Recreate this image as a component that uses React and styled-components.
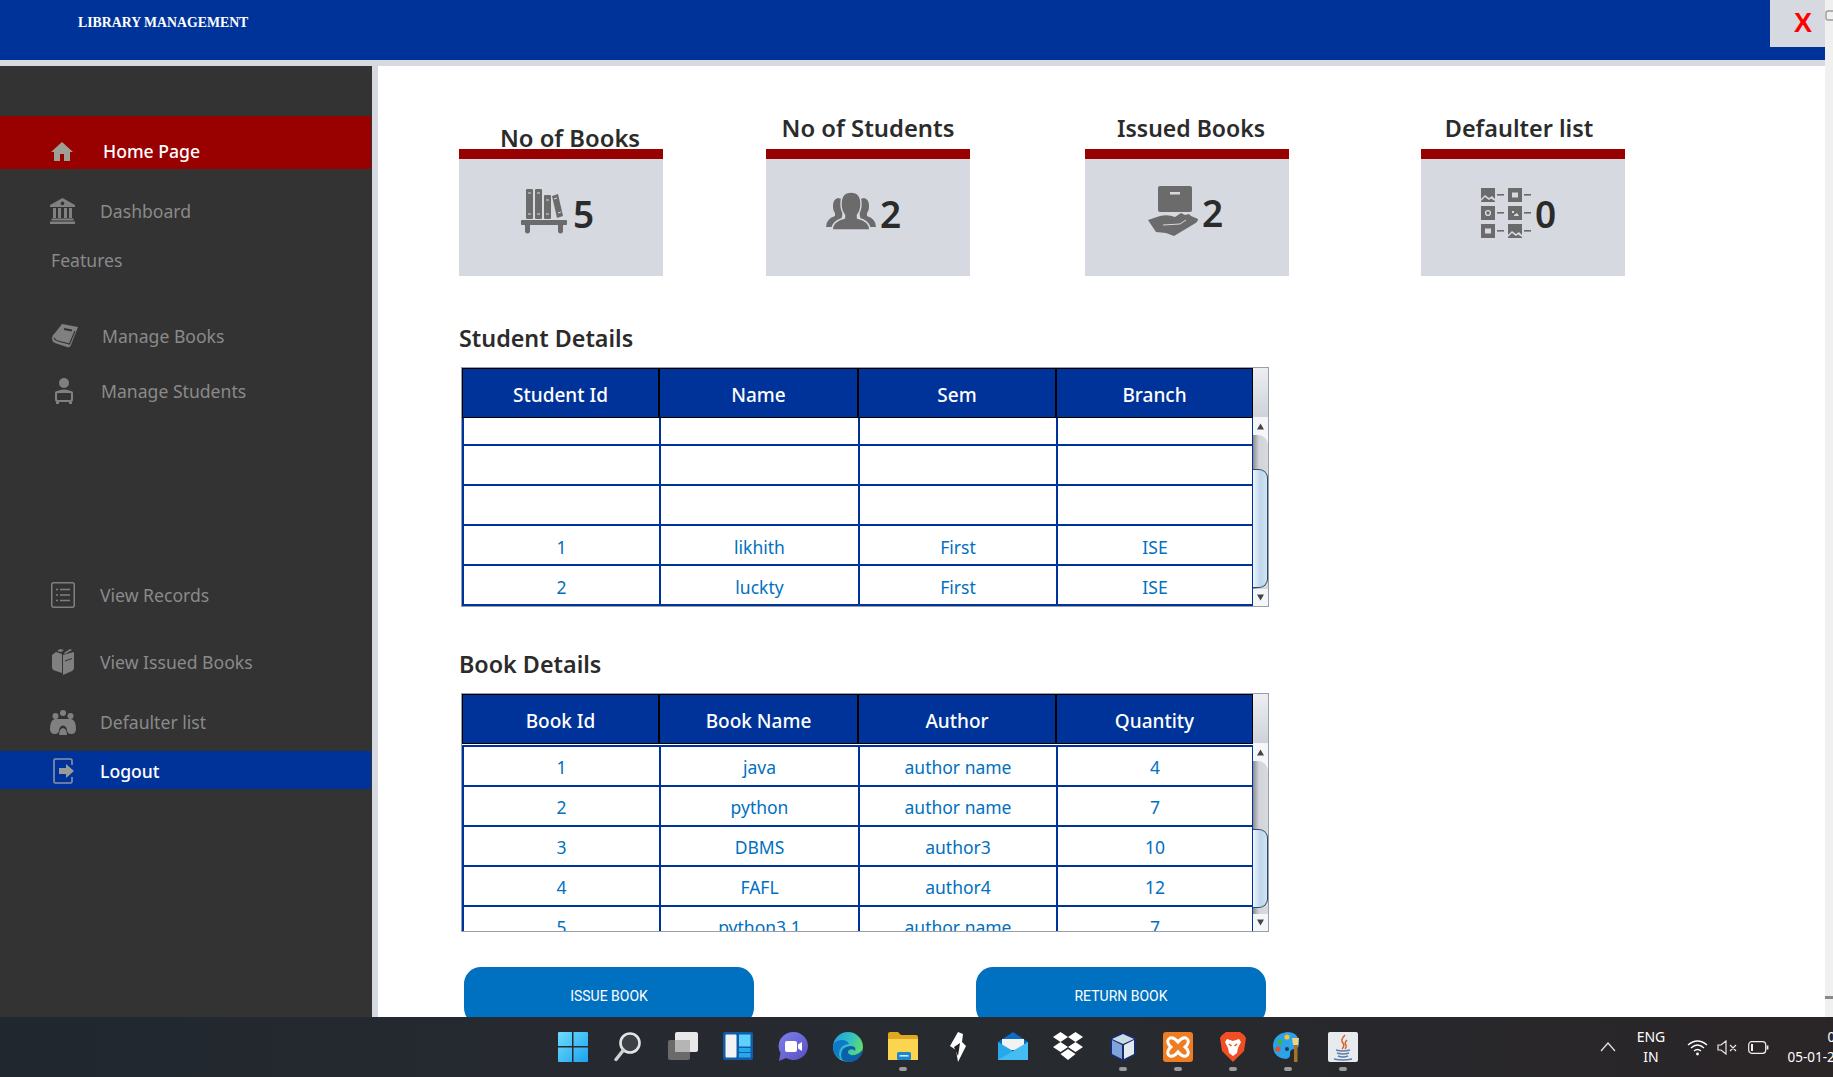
import React from 'react';
import styled, { createGlobalStyle } from 'styled-components';

const UI_FONT = '"Noto Sans", "Open Sans", sans-serif';
const BLUE = '#003399';
const RED = '#990000';
const LINK = '#0070c0';
const ICON = '#6b6b6b';
const NAV_ICON = '#808080';

const GlobalStyle = createGlobalStyle`
  html, body {
    margin: 0;
    padding: 0;
    width: 1833px;
    height: 1077px;
    overflow: hidden;
    background: #fff;
    font-family: ${UI_FONT};
  }
  * { box-sizing: border-box; }
`;

const Page = styled.div`
  width: 1833px;
  height: 1077px;
  display: flex;
  flex-direction: column;
  overflow: hidden;
`;

const Window = styled.div`
  flex: 1;
  min-height: 0;
  display: flex;
`;

const WindowInner = styled.div`
  width: 1825px;
  display: flex;
  flex-direction: column;
  background: #d6d9e0;
`;

const PageScroll = styled.div`
  width: 8px;
  background: #f0f0f0;
  display: flex;
  flex-direction: column;
  justify-content: space-between;
  svg { display: block; margin-top: 10px; }
  span { display: block; height: 3px; background: #8a8a8a; margin-bottom: 18px; }
`;

const Header = styled.header`
  height: 60px;
  flex-shrink: 0;
  background: ${BLUE};
  display: flex;
  justify-content: space-between;
  align-items: flex-start;
`;

const Brand = styled.div`
  margin: 15px 0 0 78px;
  font: bold 13.8px/16px "Liberation Serif", serif;
  color: #fff;
`;

const CloseBox = styled.div`
  width: 55px;
  height: 47px;
  background: #d6d9e0;
  color: #ff0000;
  font: bold 27px/46px "Liberation Sans", sans-serif;
  padding-left: 24px;
`;

const Body = styled.div`
  flex: 1;
  min-height: 0;
  display: flex;
  margin-top: 6px;
`;

const Sidebar = styled.nav`
  width: 372px;
  flex-shrink: 0;
  background: #333333;
  display: flex;
  flex-direction: column;
`;

const NavRow = styled.div`
  flex-shrink: 0;
  height: ${p => p.$h || 40}px;
  margin-top: ${p => p.$mt}px;
  padding-top: ${p => p.$pt || 0}px;
  background: ${p => p.$bg || 'transparent'};
  color: ${p => (p.$bg ? '#ffffff' : '#8a8a8a')};
  font-weight: ${p => (p.$bg ? 500 : 400)};
  font-size: 17.6px;
  display: flex;
  align-items: center;
  width: 371px;
  padding-left: ${p => p.$left || 50}px;
`;

const NavIcon = styled.span`
  width: ${p => p.$w || 50}px;
  flex-shrink: 0;
  display: flex;
  svg { display: block; }
`;

const Main = styled.main`
  flex: 1;
  min-width: 0;
  margin-left: 6px;
  background: #fff;
  overflow: hidden;
  padding: 51px 0 0 81px;
`;

const CardRow = styled.div`
  display: flex;
`;

const Card = styled.div`
  width: 204px;
  flex-shrink: 0;
  margin-left: ${p => p.$ml || 0}px;
`;

const CardTitle = styled.div`
  height: 32px;
  font-size: ${p => p.$size || 23.8}px;
  line-height: 22px;
  font-weight: 600;
  color: #2b2b2b;
  text-align: center;
  white-space: nowrap;
  padding-top: ${p => (p.$low ? 10 : 0)}px;
  padding-left: ${p => Math.max(p.$shift || 0, 0)}px;
  padding-right: ${p => Math.max(-(p.$shift || 0), 0)}px;
`;

const CardBody = styled.div`
  height: 127px;
  background: #d6d9e0;
  border-top: 10px solid ${RED};
  display: flex;
  align-items: flex-start;
  gap: ${p => p.$gap || 4}px;
  padding: ${p => p.$top}px 0 0 ${p => p.$left}px;
  svg { display: block; flex-shrink: 0; }
`;

const CardCount = styled.span`
  font-size: 37px;
  line-height: 44px;
  font-weight: 600;
  color: #2b2b2b;
  margin-top: ${p => p.$mt}px;
`;

const SectionTitle = styled.h2`
  margin: ${p => p.$mt}px 0 14px;
  font-size: 23.3px;
  line-height: 30px;
  font-weight: 600;
  color: #2b2b2b;
`;

const TableFrame = styled.div`
  width: 808px;
  margin-left: 2px;
  height: ${p => p.$h}px;
  border: 1px solid #9a9ea8;
  display: flex;
  overflow: hidden;
`;

const TableArea = styled.div`
  width: 791px;
  flex-shrink: 0;
  overflow: hidden;
`;

const DataTable = styled.table`
  width: 791px;
  table-layout: fixed;
  border-collapse: separate;
  border-spacing: 0;
  th {
    height: 50px;
    background: ${BLUE};
    color: #fff;
    font-size: 19px;
    font-weight: 500;
    padding: 4px 0 0;
    border-left: 1px solid #000;
    border-right: 1px solid #000;
    border-bottom: 1px solid #000;
    border-top: 1px solid #000;
  }
  td {
    height: 40px;
    padding: ${p => p.$pad}px 0 0;
    text-align: center;
    color: ${LINK};
    font-size: 17.5px;
    border-left: 2px solid ${BLUE};
    border-bottom: 2px solid ${BLUE};
  }
  td:last-child { border-right: 1px solid ${BLUE}; }
  tbody tr.short td { height: 28px; }
  tbody tr.gap td { height: 1px; padding: 0; border: 0; line-height: 0; font-size: 0; background: #fff; }
  tbody tr.first td { border-top: 2px solid ${BLUE}; height: 42px; }
`;

const ColA = styled.col`
  width: ${p => p.$w}px;
`;

const ScrollCol = styled.div`
  flex: 1;
  display: flex;
  flex-direction: column;
`;

const ScrollHead = styled.div`
  height: 50px;
  flex-shrink: 0;
  background: linear-gradient(#eceef2, #cfd2da);
  border-bottom: 1px solid #f4f5f7;
`;

const ScrollTrack = styled.div`
  flex: 1;
  min-height: 0;
  display: flex;
  flex-direction: column;
  align-items: flex-start;
  background: #f5f6f8;
`;

const Arrow = styled.div`
  height: 17px;
  width: 15px;
  flex-shrink: 0;
  display: flex;
  justify-content: center;
  align-items: center;
  color: #444;
  svg { display: block; }
`;

const TrackGroove = styled.div`
  flex: 1;
  min-height: 0;
  width: 15px;
  border-radius: 0 10px 0 0;
  background: linear-gradient(90deg, #8c8c90, #d2d4da 40%, #d8dae0);
  padding-top: ${p => p.$before}px;
`;

const Thumb = styled.div`
  width: 15px;
  height: ${p => p.$h}px;
  border: 1px solid #2f4a63;
  border-left: 0;
  border-radius: 0 9px 9px 0;
  background: linear-gradient(90deg, #eef5fb, #bcd6ea 55%, #d4e5f2);
`;

const ButtonRow = styled.div`
  display: flex;
  gap: 222px;
  margin: 35px 0 0 5px;
`;

const ActionButton = styled.button`
  width: 290px;
  height: 58px;
  border: 0;
  border-radius: 17px;
  background: #0070c0;
  color: #fff;
  font: 400 14px Roboto, sans-serif;
  flex-shrink: 0;
`;

const Taskbar = styled.footer`
  height: 60px;
  flex-shrink: 0;
  background: linear-gradient(90deg, #20272e, #262a30 30%, #272a2f 60%, #2a2527);
  display: flex;
  padding-left: 545px;
  overflow: hidden;
`;

const TaskSlot = styled.div`
  width: 55px;
  flex-shrink: 0;
  position: relative;
  display: flex;
  justify-content: center;
  padding-top: 15px;
  svg { display: block; }
  ${p => p.$open && `
    &::after {
      content: '';
      position: absolute;
      left: 50%;
      margin-left: -4px;
      bottom: 6px;
      width: 8px;
      height: 4px;
      border-radius: 2px;
      background: #9a9a9a;
    }
  `}
`;

const Tray = styled.div`
  margin-left: 230px;
  display: flex;
  align-items: center;
  flex-shrink: 0;
  color: #fff;
  svg { display: block; flex-shrink: 0; }
`;

const TrayIcon = styled.span`
  margin-left: ${p => p.$ml || 0}px;
  display: flex;
`;

const TrayLang = styled.div`
  width: 52px;
  margin: 0 10px 0 9px;
  text-align: center;
  font-size: 14px;
  line-height: 20px;
`;

const TrayClock = styled.div`
  margin-left: 7px;
  width: 82px;
  flex-shrink: 0;
  font-size: 13.5px;
  line-height: 20px;
  text-align: right;
  white-space: nowrap;
`;

const TrayTime = styled.span`
  display: block;
  margin-right: -4px;
`;

/* sidebar icons */
const HomeIcon = () => (
  <svg width="22" height="19" viewBox="0 0 22 19" fill="#a09f96">
    <path d="M11 0 L22 10 H19 V19 H13 V12 H9 V19 H3 V10 H0 Z" />
  </svg>
);

const BankIcon = () => (
  <svg width="25" height="26" viewBox="0 0 25 26" fill={NAV_ICON}>
    <path d="M12.5 0 L25 7 V9 H0 V7 Z" />
    <circle cx="12.5" cy="5.4" r="1.8" fill="#333" />
    <rect x="3" y="10" width="3" height="10" />
    <rect x="8" y="10" width="3" height="10" />
    <rect x="14" y="10" width="3" height="10" />
    <rect x="19" y="10" width="3" height="10" />
    <rect x="1.5" y="20.5" width="22" height="2" />
    <rect x="0" y="23.5" width="25" height="2.5" />
  </svg>
);

const BookIcon = () => (
  <svg width="26" height="24" viewBox="0 0 26 24" fill={NAV_ICON}>
    <path d="M10 0 L26 3 L19 21 Q18 24 15 23 L3 19 Q0 18 0 14 Q0 11 3 9 Z" />
    <path d="M12 5 L20 6.5" stroke="#333" strokeWidth="2" />
    <path d="M2 14 Q3 16.5 6 17 L17.5 20 L23 7" stroke="#333" strokeWidth="1.2" fill="none" />
  </svg>
);

const StudentIcon = () => (
  <svg width="18" height="26" viewBox="0 0 18 26" fill={NAV_ICON}>
    <circle cx="9" cy="5" r="5" />
    <path d="M2 13 Q9 10 16 13 Q18 13 18 15 V22 Q18 24 16 24 H2 Q0 24 0 22 V15 Q0 13 2 13 Z M3 15 Q2 15 2 16 V21 Q2 22 3 22 H15 Q16 22 16 21 V16 Q16 15 15 15 Z" fillRule="evenodd" />
    <rect x="1" y="24" width="3" height="2" />
    <rect x="14" y="24" width="3" height="2" />
  </svg>
);

const RecordsIcon = () => (
  <svg width="24" height="26" viewBox="0 0 24 26" fill="none" stroke={NAV_ICON}>
    <rect x="0.75" y="0.75" width="22.5" height="24.5" rx="2" strokeWidth="1.5" />
    <path d="M9 7.5 H19 M9 13 H19 M9 18.5 H19" strokeWidth="1.5" />
    <path d="M5 7.5 H7 M5 13 H7 M5 18.5 H7" strokeWidth="1.5" />
  </svg>
);

const IssuedIcon = () => (
  <svg width="22" height="26" viewBox="0 0 22 26" fill={NAV_ICON}>
    <path d="M0 6 L4 3 L10 5 V24 L4 22 Q0 21 0 18 Z" />
    <path d="M5 2 L8 0 L12 1 L9 3 Z" />
    <path d="M11 6 L22 3 V19 Q22 21 20 22 L11 26 Z" />
    <path d="M12 4 L18 0 L20 1 L13 5 Z" />
    <path d="M13 12 L20 9.5" stroke="#333" strokeWidth="1" />
  </svg>
);

const GroupIcon = () => (
  <svg width="26" height="25" viewBox="0 0 26 25" fill={NAV_ICON}>
    <circle cx="13" cy="3" r="3" />
    <circle cx="5.5" cy="6" r="3" />
    <circle cx="20.5" cy="6" r="3" />
    <path d="M0 19 Q0 10 5 9 H21 Q26 10 26 19 Q26 24 21 24 Q18 24 17 21 Q17 16 13 15.5 Q9 16 9 21 Q8 24 5 24 Q0 24 0 19 Z" />
    <path d="M9 25 Q9 19 13 18 Q17 19 17 25 Z" />
  </svg>
);

const LogoutIcon = () => (
  <svg width="22" height="26" viewBox="0 0 22 26">
    <path d="M19 7 V2.5 Q19 1 17.5 1 H2.5 Q1 1 1 2.5 V23.5 Q1 25 2.5 25 H17.5 Q19 25 19 23.5 V19" fill="none" stroke="#8a93a8" strokeWidth="1.6" />
    <path d="M6 10 H13 V6 L21 13 L13 20 V16 H6 Z" fill="#9a9a9a" />
  </svg>
);

/* card icons */
const ShelfIcon = () => (
  <svg width="46" height="45" viewBox="0 0 46 45" fill={ICON}>
    <rect x="5" y="0" width="7" height="30" rx="1" />
    <rect x="14" y="0" width="7" height="30" rx="1" />
    <rect x="23" y="6" width="7" height="24" rx="1" />
    <path d="M31 7 L37 5 L42 27 L36 29 Z" />
    <path d="M7 4 H10 M16 4 H19 M7 25 H10 M16 25 H19 M25 11 H28 M25 25 H28 M33 10 L36 9 M37 24 L40 23" stroke="#d6d9e0" strokeWidth="1" />
    <rect x="0" y="31" width="46" height="5" rx="1" />
    <path d="M4 36 H9 V43 Q6.5 46 4 43 Z M37 36 H42 V43 Q39.5 46 37 43 Z" />
  </svg>
);

const PeopleIcon = () => (
  <svg width="50" height="38" viewBox="0 0 50 38" fill={ICON}>
    <path d="M12 6 Q7 7 7 14 Q7 19 9 21 V24 Q0 27 0 35 H14 L19 8 Z" />
    <path d="M38 6 Q43 7 43 14 Q43 19 41 21 V24 Q50 27 50 35 H36 L31 8 Z" />
    <path d="M25 0 Q35 0 35 12 Q35 19 31.5 23 V26 Q44 29 44 38 H6 Q6 29 18.5 26 V23 Q15 19 15 12 Q15 0 25 0 Z" stroke="#d6d9e0" strokeWidth="1.4" />
  </svg>
);

const BoxHandIcon = () => (
  <svg width="50" height="50" viewBox="0 0 50 50" fill={ICON}>
    <rect x="10" y="0" width="34" height="26" rx="2" />
    <rect x="22" y="6" width="10" height="2.5" fill="#d6d9e0" />
    <path d="M0 34 L12 30 Q20 28 27 31 L33 27 L37 29 L41 28 L43 30 L50 33 Q50 36 46 38 L26 50 L18 47 L8 46 Z" />
    <path d="M15 39 L32 38 L38 34" fill="none" stroke="#d6d9e0" strokeWidth="1" />
  </svg>
);

const Tile = ({ x, y, kind }) => (
  <g transform={`translate(${x} ${y})`}>
    <rect width="14" height="14" fill={ICON} />
    {kind === 'pic' && <path d="M0 11 L4 7 L8 10 L11 8 L14 11 V13 L10 10.5 L8 12 L4 9 L0 13 Z" fill="#d6d9e0" />}
    {kind === 'dot' && <rect x="4" y="4.5" width="6" height="5" fill="#d6d9e0" />}
    {kind === 'gear' && <circle cx="7" cy="7" r="2.4" fill="none" stroke="#d6d9e0" strokeWidth="1.4" />}
    {kind === 'spark' && <path d="M4 5 H6 V7 H4 Z M6 9 L9 7 L11 10 H6 Z" fill="#d6d9e0" />}
    <rect x="16" y="6" width="7" height="1.6" fill={ICON} />
  </g>
);

const TilesIcon = () => (
  <svg width="50" height="51" viewBox="0 0 50 51">
    <Tile x={0} y={1} kind="pic" />
    <Tile x={27} y={1} kind="dot" />
    <Tile x={0} y={19} kind="gear" />
    <Tile x={27} y={19} kind="spark" />
    <Tile x={0} y={37} kind="dot" />
    <Tile x={27} y={37} kind="pic" />
  </svg>
);

/* taskbar icons */
const WinIcon = () => (
  <svg width="30" height="30" viewBox="0 0 30 30">
    <defs>
      <linearGradient id="winA" x1="0" y1="0" x2="1" y2="1">
        <stop offset="0" stopColor="#6fdcfb" />
        <stop offset="1" stopColor="#1aa3ee" />
      </linearGradient>
    </defs>
    <path d="M0 1 Q0 0 1 0 H14 V14 H0 Z M15.5 0 H29 Q30 0 30 1 V14 H15.5 Z M0 15.5 H14 V30 H1 Q0 30 0 29 Z M15.5 15.5 H30 V29 Q30 30 29 30 H15.5 Z" fill="url(#winA)" />
  </svg>
);

const SearchIcon = () => (
  <svg width="28" height="30" viewBox="0 0 28 30">
    <circle cx="16" cy="11" r="9.5" fill="#3c4148" stroke="#e4e4e4" strokeWidth="2.6" />
    <path d="M9.5 18 L2 27.5" stroke="#d0d0d0" strokeWidth="3.4" strokeLinecap="round" />
  </svg>
);

const TaskViewIcon = () => (
  <svg width="30" height="30" viewBox="0 0 30 30">
    <rect x="0" y="8" width="22" height="20" rx="2" fill="#6a6a6a" />
    <rect x="7" y="0" width="23" height="20" rx="2" fill="#e8e8e8" />
    <rect x="7" y="8" width="15" height="12" fill="#b5b5b5" />
  </svg>
);

const WidgetsIcon = () => (
  <svg width="30" height="28" viewBox="0 0 30 28">
    <rect width="30" height="28" rx="2" fill="#0f5ca8" />
    <rect x="2.5" y="2.5" width="11" height="23" rx="1" fill="#f3f3f3" />
    <rect x="16" y="2.5" width="11.5" height="12" fill="#5fd0fb" />
    <rect x="16" y="16" width="11.5" height="4" fill="#28a8ec" />
    <rect x="16" y="21" width="11.5" height="4.5" fill="#28a8ec" />
  </svg>
);

const ChatIcon = () => (
  <svg width="30" height="30" viewBox="0 0 30 30">
    <defs>
      <linearGradient id="chatA" x1="0" y1="0" x2="1" y2="1">
        <stop offset="0" stopColor="#7b83eb" />
        <stop offset="1" stopColor="#5b4bc4" />
      </linearGradient>
    </defs>
    <path d="M15 0 A14.5 14 0 1 1 8 26 L1 29 L2.5 21 A14.5 14 0 0 1 15 0 Z" fill="url(#chatA)" />
    <rect x="7" y="9" width="12" height="11" rx="2" fill="#fff" />
    <path d="M20 12.5 L24 10 V19 L20 16.5 Z" fill="#fff" />
  </svg>
);

const EdgeIcon = () => (
  <svg width="30" height="30" viewBox="0 0 30 30">
    <defs>
      <linearGradient id="edgeA" x1="0" y1="0" x2="1" y2="0.4">
        <stop offset="0" stopColor="#1b9de2" />
        <stop offset="0.6" stopColor="#35c1c1" />
        <stop offset="1" stopColor="#5fdc6c" />
      </linearGradient>
    </defs>
    <circle cx="15" cy="15" r="15" fill="url(#edgeA)" />
    <path d="M30 17 Q28 30 15 30 Q8 30 8 23 Q8 15 17 14 Q24 14 22 19 Q20 16 16 18 Q13 21 18 23 Q25 24 30 17 Z" fill="#0c5fa8" />
    <path d="M0 15 Q1 8 9 8 Q14 8 16 12 Q7 12 6 22 Q6 25 8 27 Q0 23 0 15 Z" fill="#0f78c8" />
  </svg>
);

const FilesIcon = () => (
  <svg width="30" height="28" viewBox="0 0 30 28">
    <path d="M0 2 Q0 0 2 0 H10 L13 3 H28 Q30 3 30 5 V10 H0 Z" fill="#e0a820" />
    <path d="M0 7 H30 V28 H0 Z" fill="#fcd550" />
    <rect x="9" y="20" width="14" height="8" rx="1.5" fill="#1a86d0" />
    <rect x="11.5" y="23" width="9" height="1.6" fill="#cce6f8" />
  </svg>
);

const PenIcon = () => (
  <svg width="16" height="30" viewBox="0 0 16 30">
    <path d="M8 0 L13 2 L12 10 L16 14 L8 30 L6 18 L0 14 Z" fill="#fff" />
    <path d="M4 15 L10 11 L8 24 Z" fill="#222" />
  </svg>
);

const MailIcon = () => (
  <svg width="30" height="28" viewBox="0 0 30 28">
    <path d="M0 10 L15 0 L30 10 V12 H0 Z" fill="#0a6cc4" />
    <path d="M4 7 H26 V18 H4 Z" fill="#f2f2f2" />
    <path d="M0 10 L15 19 L30 10 V28 H0 Z" fill="#28a8ea" />
    <path d="M30 10 V28 H0 Z" fill="#50c8f5" opacity="0.7" />
  </svg>
);

const DropboxIcon = () => (
  <svg width="30" height="28" viewBox="0 0 30 28" fill="#fff">
    <path d="M7.5 0 L15 5 L7.5 10 L0 5 Z M22.5 0 L30 5 L22.5 10 L15 5 Z M7.5 10 L15 15 L7.5 20 L0 15 Z M22.5 10 L30 15 L22.5 20 L15 15 Z M15 17 L22.5 22 L15 28 L7.5 22 Z" />
  </svg>
);

const CubeIcon = () => (
  <svg width="28" height="30" viewBox="0 0 28 30">
    <path d="M14 0 L27 6 V23 L14 30 L1 23 V6 Z" fill="#1c2a66" />
    <path d="M14 2 L25 7 L14 12 L3 7 Z" fill="#c6dde6" />
    <path d="M3 8 L13 13 V27 L3 22 Z" fill="#7fa4dc" />
    <path d="M15 13 L25 8 V22 L15 27 Z" fill="#e4ebf0" />
  </svg>
);

const XamppIcon = () => (
  <svg width="30" height="30" viewBox="0 0 30 30">
    <rect width="30" height="30" rx="3" fill="#ee7d22" />
    <path d="M7 6 Q11 5 15 10 Q19 5 23 6 Q27 8 24 13 L22 15 L24 17 Q27 22 23 24 Q19 25 15 20 Q11 25 7 24 Q3 22 6 17 L8 15 L6 13 Q3 8 7 6 Z" fill="none" stroke="#fff" strokeWidth="3" />
  </svg>
);

const BraveIcon = () => (
  <svg width="26" height="30" viewBox="0 0 26 30">
    <path d="M6 0 H20 L24 3 L26 6 L24 19 L13 30 L2 19 L0 6 L2 3 Z" fill="#f04f23" />
    <path d="M7 7 L13 9 L19 7 L21 10 L18 16 L17 21 L13 24 L9 21 L8 16 L5 10 Z" fill="#fff" />
    <path d="M9 12 L11.5 14 M17 12 L14.5 14" stroke="#f04f23" strokeWidth="1.6" />
  </svg>
);

const PaintIcon = () => (
  <svg width="29" height="30" viewBox="0 0 29 30">
    <path d="M14 0 Q26 0 26 12 Q26 16 22 17 Q17 17 17 21 Q18 26 13 27 Q0 26 0 13 Q1 2 14 0 Z" fill="#2aa3e8" />
    <circle cx="7" cy="10" r="2.6" fill="#3fb54a" />
    <circle cx="14" cy="5" r="2.6" fill="#f7c32e" />
    <circle cx="5" cy="17" r="2.6" fill="#e8502c" />
    <circle cx="14" cy="17" r="2" fill="#1d3a55" />
    <rect x="21" y="12" width="3.5" height="18" fill="#a57328" />
    <path d="M19 6 L26 6 L25 13 H20 Z" fill="#f0cf86" />
  </svg>
);

const JavaIcon = () => (
  <svg width="30" height="30" viewBox="0 0 30 30">
    <rect width="30" height="30" rx="2" fill="#e8ebee" />
    <path d="M17 3 Q12 8 15 11 Q17 14 14 17 M19 8 Q16 11 18 13 Q19 15 17 17" fill="none" stroke="#d4632a" strokeWidth="1.5" />
    <path d="M8 18 Q15 20 22 18 M9 21 Q15 23 21 21 M10 24 Q15 26 20 24 M6 27 Q15 29 24 27" fill="none" stroke="#5c7fa8" strokeWidth="1.4" />
  </svg>
);

const COLS = [197, 199, 198, 197];

const StudentRows = [
  { cls: 'short', cells: ['', '', '', ''] },
  { cells: ['', '', '', ''] },
  { cells: ['', '', '', ''] },
  { cells: ['1', 'likhith', 'First', 'ISE'] },
  { cells: ['2', 'luckty', 'First', 'ISE'] },
];

const BookRows = [
  { cls: 'gap', cells: ['', '', '', ''] },
  { cls: 'first', cells: ['1', 'java', 'author name', '4'] },
  { cells: ['2', 'python', 'author name', '7'] },
  { cells: ['3', 'DBMS', 'author3', '10'] },
  { cells: ['4', 'FAFL', 'author4', '12'] },
  { cells: ['5', 'python3.1', 'author name', '7'] },
];

const Grid = ({ heads, rows, height, before, thumb, pad }) => (
  <TableFrame $h={height}>
    <TableArea>
      <DataTable $pad={pad}>
        <colgroup>{COLS.map((w, i) => <ColA key={i} $w={w} />)}</colgroup>
        <thead>
          <tr>{heads.map(h => <th key={h}>{h}</th>)}</tr>
        </thead>
        <tbody>
          {rows.map((r, i) => (
            <tr key={i} className={r.cls}>
              {r.cells.map((c, j) => <td key={j}>{c}</td>)}
            </tr>
          ))}
        </tbody>
      </DataTable>
    </TableArea>
    <ScrollCol>
      <ScrollHead />
      <ScrollTrack>
        <Arrow><svg width="7" height="7" viewBox="0 0 9 8" fill="currentColor"><path d="M4.5 0 L9 8 H0 Z" /></svg></Arrow>
        <TrackGroove $before={before}><Thumb $h={thumb} /></TrackGroove>
        <Arrow><svg width="7" height="7" viewBox="0 0 9 8" fill="currentColor"><path d="M0 0 H9 L4.5 8 Z" /></svg></Arrow>
      </ScrollTrack>
    </ScrollCol>
  </TableFrame>
);

const taskIcons = [
  [WinIcon, false], [SearchIcon, false], [TaskViewIcon, false], [WidgetsIcon, false],
  [ChatIcon, false], [EdgeIcon, false], [FilesIcon, true], [PenIcon, false],
  [MailIcon, false], [DropboxIcon, false], [CubeIcon, true], [XamppIcon, true],
  [BraveIcon, true], [PaintIcon, true], [JavaIcon, true],
];

export default function App() {
  return (
    <Page>
      <GlobalStyle />
      <Window>
        <WindowInner>
          <Header>
            <Brand>LIBRARY MANAGEMENT</Brand>
            <CloseBox>X</CloseBox>
          </Header>
          <Body>
            <Sidebar>
              <NavRow $mt={50} $h={53} $pt={17} $bg={RED} $left={51}>
                <NavIcon $w={52}><HomeIcon /></NavIcon>Home Page
              </NavRow>
              <NavRow $mt={22}><NavIcon><BankIcon /></NavIcon>Dashboard</NavRow>
              <NavRow $mt={9} $left={51}>Features</NavRow>
              <NavRow $mt={36} $left={52}><NavIcon><BookIcon /></NavIcon>Manage Books</NavRow>
              <NavRow $mt={15} $left={55}><NavIcon $w={46}><StudentIcon /></NavIcon>Manage Students</NavRow>
              <NavRow $mt={164} $left={51}><NavIcon $w={49}><RecordsIcon /></NavIcon>View Records</NavRow>
              <NavRow $mt={27} $left={52}><NavIcon $w={48}><IssuedIcon /></NavIcon>View Issued Books</NavRow>
              <NavRow $mt={20}><NavIcon><GroupIcon /></NavIcon>Defaulter list</NavRow>
              <NavRow $mt={9} $h={38} $pt={2} $bg={BLUE} $left={53}>
                <NavIcon $w={47}><LogoutIcon /></NavIcon>Logout
              </NavRow>
            </Sidebar>
            <Main>
              <CardRow>
                <Card>
                  <CardTitle $low $shift={18}>No of Books</CardTitle>
                  <CardBody $top={30} $left={62} $gap={6}><ShelfIcon /><CardCount $mt={3}>5</CardCount></CardBody>
                </Card>
                <Card $ml={103}>
                  <CardTitle>No of Students</CardTitle>
                  <CardBody $top={33} $left={60}><PeopleIcon /><CardCount>2</CardCount></CardBody>
                </Card>
                <Card $ml={115}>
                  <CardTitle $shift={8} $size={23}>Issued Books</CardTitle>
                  <CardBody $top={27} $left={63}><BoxHandIcon /><CardCount $mt={5}>2</CardCount></CardBody>
                </Card>
                <Card $ml={132}>
                  <CardTitle $shift={-8} $size={23.4}>Defaulter list</CardTitle>
                  <CardBody $top={28} $left={60}><TilesIcon /><CardCount $mt={5}>0</CardCount></CardBody>
                </Card>
              </CardRow>

              <SectionTitle $mt={47}>Student Details</SectionTitle>
              <Grid
                heads={['Student Id', 'Name', 'Sem', 'Branch']}
                rows={StudentRows}
                height={240}
                before={34}
                thumb={119}
                pad={4}
              />

              <SectionTitle $mt={42}>Book Details</SectionTitle>
              <Grid
                heads={['Book Id', 'Book Name', 'Author', 'Quantity']}
                rows={BookRows}
                height={239}
                before={68}
                thumb={79}
                pad={2}
              />

              <ButtonRow>
                <ActionButton>ISSUE BOOK</ActionButton>
                <ActionButton>RETURN BOOK</ActionButton>
              </ButtonRow>
            </Main>
          </Body>
        </WindowInner>
        <PageScroll>
          <svg width="8" height="11" viewBox="0 0 8 11" fill="none" stroke="#9a9a9a" strokeWidth="1.4"><rect x="1" y="1" width="9" height="9" rx="2" /></svg>
          <span />
        </PageScroll>
      </Window>
      <Taskbar>
        {taskIcons.map(([Icon, open], i) => (
          <TaskSlot key={i} $open={open}><Icon /></TaskSlot>
        ))}
        <Tray>
          <svg width="16" height="10" viewBox="0 0 16 10" fill="none" stroke="#e8e8e8" strokeWidth="1.2"><path d="M1 9 L8 1 L15 9" /></svg>
          <TrayLang>ENG<br />IN</TrayLang>
          <svg width="21" height="17" viewBox="0 0 21 17" fill="none" stroke="#fff" strokeWidth="1.3">
            <path d="M1 6 Q10.5 -2 20 6 M4 9 Q10.5 3 17 9 M7 12 Q10.5 9 14 12" />
            <circle cx="10.5" cy="15" r="1.4" fill="#fff" stroke="none" />
          </svg>
          <TrayIcon $ml={9}>
            <svg width="20" height="15" viewBox="0 0 20 15" fill="none" stroke="#e8e8e8" strokeWidth="1.2">
              <path d="M1 5 H4 L9 1 V14 L4 10 H1 Z M13 5 L19 11 M19 5 L13 11" />
            </svg>
          </TrayIcon>
          <TrayIcon $ml={11}>
            <svg width="21" height="13" viewBox="0 0 21 13" fill="none" stroke="#f0f0f0" strokeWidth="1.2">
              <rect x="0.7" y="0.7" width="17" height="11.6" rx="3" />
              <rect x="3" y="3" width="2" height="7" fill="#f0f0f0" stroke="none" />
              <path d="M19.5 4.5 V8.5" strokeWidth="1.8" />
            </svg>
          </TrayIcon>
          <TrayClock><TrayTime>09:41</TrayTime>05-01-2023</TrayClock>
        </Tray>
      </Taskbar>
    </Page>
  );
}
